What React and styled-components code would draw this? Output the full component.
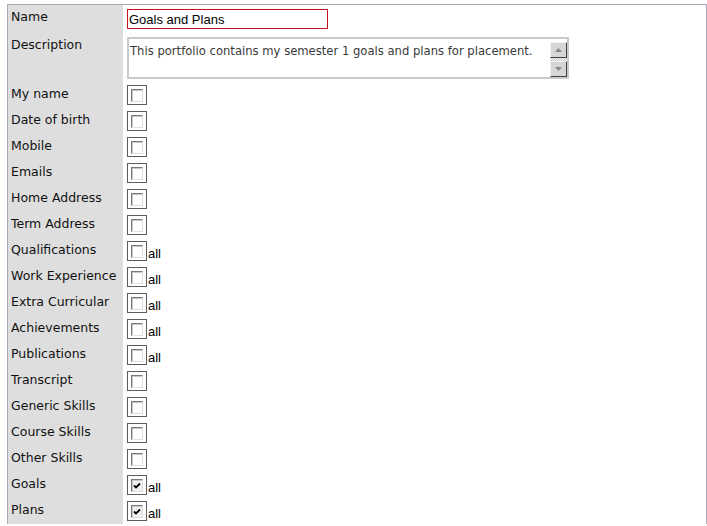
import React from "react";
import styled, { createGlobalStyle } from "styled-components";

const Global = createGlobalStyle`
  body {
    margin: 0;
    background: #fff;
  }
`;

const Frame = styled.div`
  margin: 4px 0 0 7px;
  width: 700px;
  box-sizing: border-box;
  border: 1px solid #a9a9ba;
  border-bottom: none;
  font-family: "DejaVu Sans", Verdana, sans-serif;
  font-size: 12.5px;
  color: #111;
`;

const Row = styled.div`
  display: grid;
  grid-template-columns: 115px 1fr;
`;

const Label = styled.div`
  background: #dedede;
  padding: 5px 3px 0 3px;
  line-height: 14px;
`;

const Value = styled.div`
  display: flex;
  align-items: flex-end;
  padding: ${(p) => p.$pad || "3px 4px"};
`;

const TextInput = styled.div`
  width: 201px;
  height: 20px;
  box-sizing: border-box;
  border: 1px solid #c8101e;
  padding: 0 1px;
  font-family: "Liberation Sans", Arial, sans-serif;
  font-size: 13px;
  line-height: 19px;
  color: #000;
`;

const TextArea = styled.div`
  display: flex;
  width: 442px;
  height: 42px;
  box-sizing: border-box;
  border: 2px solid #cacaca;
  background: #fff;
`;

const AreaText = styled.div`
  flex: 1;
  padding: 5px 1px;
  font-size: 11.6px;
  line-height: 14px;
  color: #3a3a3a;
`;

const ScrollBar = styled.div`
  width: 17px;
  margin: 3px 0 0 0;
  display: flex;
  flex-direction: column;
`;

const ScrollBtn = styled.div`
  height: 16px;
  box-sizing: border-box;
  background: #d6d6d6;
  border: 1px solid;
  border-color: #f4f4f4 #404040 #404040 #f4f4f4;
  display: flex;
  align-items: center;
  justify-content: center;
`;

const Track = styled.div`
  flex: 1;
  background-color: #e6e6e6;
  background-image: repeating-conic-gradient(#cfcfcf 0 25%, #f2f2f2 0 50%);
  background-size: 2px 2px;
`;

const Box = styled.span`
  display: inline-flex;
  width: 20px;
  height: 20px;
  box-sizing: border-box;
  border: 1px solid #5c5c5c;
  padding: 3px;
  background: #fff;
`;

const Inner = styled.span`
  display: flex;
  align-items: center;
  justify-content: center;
  width: 13px;
  height: 13px;
  box-sizing: border-box;
  border: 1px solid;
  border-color: #7a7a7a #dedede #dedede #7a7a7a;
  box-shadow: inset 1px 1px 0 #c8c8c8;
  background: ${(p) => (p.$checked ? "#f1f1f1" : "#fff")};
`;

const All = styled.span`
  font-family: "Liberation Sans", Arial, sans-serif;
  font-size: 13px;
  line-height: 13px;
  margin: 0 0 1px 1px;
  color: #000;
`;

const Arrow = ({ up }) => (
  <svg width="7" height="4" viewBox="0 0 7 4">
    <path d={up ? "M0 4 L3.5 0 L7 4 Z" : "M0 0 L3.5 4 L7 0 Z"} fill="#888" />
  </svg>
);

const Checkbox = ({ checked }) => (
  <Box>
    <Inner $checked={checked}>
      {checked && (
        <svg width="8" height="8" viewBox="0 0 8 8">
          <path d="M1 3.5 L3 5.5 L7 1.5" stroke="#000" strokeWidth="1.8" fill="none" />
        </svg>
      )}
    </Inner>
  </Box>
);

const fields = [
  { label: "My name" },
  { label: "Date of birth" },
  { label: "Mobile" },
  { label: "Emails" },
  { label: "Home Address" },
  { label: "Term Address" },
  { label: "Qualifications", all: true },
  { label: "Work Experience", all: true },
  { label: "Extra Curricular", all: true },
  { label: "Achievements", all: true },
  { label: "Publications", all: true },
  { label: "Transcript" },
  { label: "Generic Skills" },
  { label: "Course Skills" },
  { label: "Other Skills" },
  { label: "Goals", all: true, checked: true },
  { label: "Plans", all: true, checked: true },
];

export default function App() {
  return (
    <>
      <Global />
      <Frame>
        <Row>
          <Label>Name</Label>
          <Value $pad="4px 4px">
            <TextInput>Goals and Plans</TextInput>
          </Value>
        </Row>
        <Row>
          <Label>Description</Label>
          <Value $pad="4px 4px 3px">
            <TextArea>
              <AreaText>
                This portfolio contains my semester 1 goals and plans for placement.
              </AreaText>
              <ScrollBar>
                <ScrollBtn>
                  <Arrow up />
                </ScrollBtn>
                <Track />
                <ScrollBtn>
                  <Arrow />
                </ScrollBtn>
              </ScrollBar>
            </TextArea>
          </Value>
        </Row>
        {fields.map((f) => (
          <Row key={f.label}>
            <Label>{f.label}</Label>
            <Value>
              <Checkbox checked={f.checked} />
              {f.all && <All>all</All>}
            </Value>
          </Row>
        ))}
      </Frame>
    </>
  );
}
